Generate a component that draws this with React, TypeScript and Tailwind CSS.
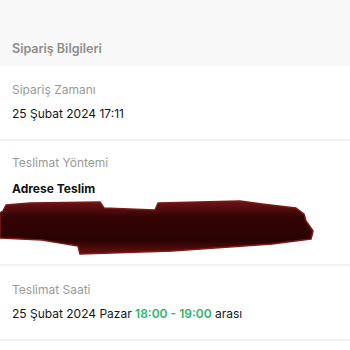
import React from 'react';

const font = { fontFamily: 'Inter, "Noto Sans", sans-serif' };

function Scribble() {
  return (
    <svg width="350" height="56" viewBox="0 0 350 56" className="-ml-3 block">
      <defs>
        <linearGradient id="ink" x1="0" y1="0" x2="0" y2="1">
          <stop offset="0" stopColor="#701414" />
          <stop offset="0.3" stopColor="#340404" />
          <stop offset="0.75" stopColor="#2a0202" />
          <stop offset="1" stopColor="#6a1010" />
        </linearGradient>
      </defs>
      <path
        d="M3 12 L6 6 L30 4 L100 3 L104 9 L155 11 L158 4 L240 2 L262 5 L296 9 L304 15 L306 22 L313 32 L311 40 L272 45 L172 52 L80 55 L78 47 L42 41 L0 39 L0 14 Z"
        fill="url(#ink)"
        stroke="#7a1a1a"
        strokeWidth="1.5"
        strokeLinejoin="round"
      />
    </svg>
  );
}

function Section({ children }: { children: React.ReactNode }) {
  return <div className="border-b-2 border-[#f1f1f1] bg-white px-3">{children}</div>;
}

export default function App() {
  return (
    <div className="h-[350px] w-[350px] overflow-hidden bg-white" style={font}>
      <div className="flex h-[66px] items-end bg-[#f8f8f8] px-3 pb-[9px]">
        <span className="text-[12.5px] leading-4 font-semibold text-[#8e8e8a]">Sipariş Bilgileri</span>
      </div>

      <Section>
        <div className="flex flex-col gap-2 pt-4 pb-[17px]">
          <span className="text-[12px] leading-4 text-[#9a9a95]">Sipariş Zamanı</span>
          <span className="text-[12px] leading-4 text-[#161616]">25 Şubat 2024 17:11</span>
        </div>
      </Section>

      <Section>
        <div className="flex flex-col pt-[14px]">
          <span className="text-[12px] leading-4 text-[#9a9a95]">Teslimat Yöntemi</span>
          <span className="mt-[10px] text-[12px] leading-4 font-bold text-[#111]">Adrese Teslim</span>
          <div className="mt-[2px] h-[65px]">
            <Scribble />
          </div>
        </div>
      </Section>

      <Section>
        <div className="flex flex-col gap-2 pt-4 pb-[17px]">
          <span className="text-[12px] leading-4 text-[#9a9a95]">Teslimat Saati</span>
          <span className="text-[12px] leading-4 text-[#161616]">
            25 Şubat 2024 Pazar <span className="font-semibold text-[#2eb36b]">18:00 - 19:00</span> arası
          </span>
        </div>
      </Section>
    </div>
  );
}
